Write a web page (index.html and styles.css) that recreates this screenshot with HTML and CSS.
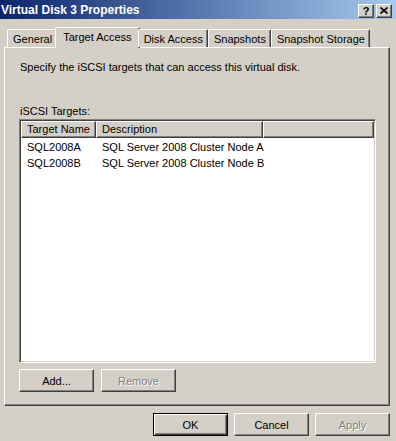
FILE: index.html
```html
<!DOCTYPE html>
<html lang="en">
<head>
    <meta charset="UTF-8">
    <title>Virtual Disk 3 Properties</title>
    <link rel="stylesheet" href="styles.css">
</head>
<body>
    <div class="window">
        <div class="titlebar">
            <span class="title">Virtual Disk 3 Properties</span>
            <div class="caption-btns">
                <span class="cap-btn">?</span>
                <span class="cap-btn">
                    <svg width="8" height="7" viewBox="0 0 8 7"><path d="M0.5 0.5 L7.5 6.5 M7.5 0.5 L0.5 6.5" stroke="#000" stroke-width="1.6" fill="none"/></svg>
                </span>
            </div>
        </div>

        <div class="content">
            <div class="tabs">
                <div class="tab">General</div>
                <div class="tab tab-active">Target Access</div>
                <div class="tab">Disk Access</div>
                <div class="tab">Snapshots</div>
                <div class="tab">Snapshot Storage</div>
            </div>

            <div class="panel">
                <p class="intro">Specify the iSCSI targets that can access this virtual disk.</p>
                <p class="list-label">iSCSI Targets:</p>
                <div class="listview">
                    <div class="lv-header">
                        <div class="lv-col col-name">Target Name</div>
                        <div class="lv-col col-desc">Description</div>
                        <div class="lv-col col-fill"></div>
                    </div>
                    <div class="lv-row">
                        <div class="lv-cell col-name">SQL2008A</div>
                        <div class="lv-cell col-desc">SQL Server 2008 Cluster Node A</div>
                    </div>
                    <div class="lv-row">
                        <div class="lv-cell col-name">SQL2008B</div>
                        <div class="lv-cell col-desc">SQL Server 2008 Cluster Node B</div>
                    </div>
                </div>
                <div class="panel-buttons">
                    <button class="btn">Add...</button>
                    <button class="btn" disabled>Remove</button>
                </div>
            </div>

            <div class="dialog-buttons">
                <button class="btn btn-default">OK</button>
                <button class="btn">Cancel</button>
                <button class="btn" disabled>Apply</button>
            </div>
        </div>
    </div>
</body>
</html>
```
FILE: styles.css
```css
body {
    margin: 0;
    background-color: #d4d0c8;
    font-family: "Liberation Sans", Arial, sans-serif;
    font-size: 11px;
    color: #000;
}
.window {
    width: 396px;
    height: 441px;
    overflow: hidden;
}
.titlebar {
    height: 19px;
    box-sizing: border-box;
    padding: 0 4px 0 1px;
    display: flex;
    align-items: center;
    justify-content: space-between;
    background: linear-gradient(to right, #0a246a, #a6caf0);
}
.title {
    color: #fff;
    font-weight: bold;
    font-size: 12px;
}
.caption-btns {
    display: flex;
    gap: 2px;
    margin-top: 2px;
}
.cap-btn {
    width: 16px;
    height: 14px;
    box-sizing: border-box;
    display: flex;
    align-items: center;
    justify-content: center;
    background-color: #d4d0c8;
    border: 1px solid;
    border-color: #fff #404040 #404040 #fff;
    box-shadow: inset -1px -1px #808080;
    font-weight: bold;
    font-size: 11px;
}
.content {
    padding: 8px 6px 0 4px;
}
.tabs {
    display: flex;
    align-items: flex-end;
    height: 20px;
    padding-left: 3px;
    position: relative;
    z-index: 1;
}
.tab {
    height: 18px;
    box-sizing: border-box;
    padding: 0 4px 0 5px;
    display: flex;
    align-items: center;
    border-left: 1px solid #fff;
    border-top: 1px solid #fff;
    border-right: 1px solid #404040;
    border-radius: 2px 2px 0 0;
    box-shadow: inset -1px 0 #808080;
    background-color: #d4d0c8;
}
.tab-active {
    height: 21px;
    margin: 0 -2px -1px;
    padding: 0 7px 3px;
}
.panel {
    height: 359px;
    box-sizing: border-box;
    border: 1px solid;
    border-color: #fff #404040 #404040 #fff;
    box-shadow: inset -1px -1px #808080;
    padding: 13px 13px 0 14px;
}
.intro {
    margin: 0;
    line-height: 13px;
    padding-left: 1px;
}
.list-label {
    margin: 31px 0 1px;
    line-height: 13px;
    padding-left: 1px;
}
.listview {
    height: 244px;
    box-sizing: border-box;
    padding: 1px;
    background-color: #fff;
    border: 1px solid;
    border-color: #808080 #fff #fff #808080;
    box-shadow: inset 1px 1px #404040, inset -1px -1px #d4d0c8;
}
.lv-header {
    display: flex;
    height: 17px;
}
.lv-col {
    box-sizing: border-box;
    height: 17px;
    padding-left: 5px;
    line-height: 15px;
    background-color: #d4d0c8;
    border: 1px solid;
    border-color: #fff #404040 #404040 #fff;
    box-shadow: inset -1px -1px #808080;
}
.col-name {
    width: 75px;
    flex-shrink: 0;
}
.col-desc {
    width: 167px;
    flex-shrink: 0;
}
.col-fill {
    flex: 1;
}
.lv-row {
    display: flex;
    height: 16px;
    line-height: 16px;
}
.lv-header + .lv-row {
    margin-top: 1px;
}
.lv-cell {
    padding-left: 6px;
    box-sizing: border-box;
    white-space: nowrap;
}
.btn {
    width: 75px;
    height: 23px;
    padding: 0;
    font: inherit;
    color: #000;
    background-color: #d4d0c8;
    border: 1px solid;
    border-color: #fff #404040 #404040 #fff;
    box-shadow: inset -1px -1px #808080;
}
.btn:disabled {
    color: #808080;
    text-shadow: 1px 1px #fff;
}
.btn-default {
    border-color: #000;
    box-shadow: inset 1px 1px #fff, inset -1px -1px #404040, inset -2px -2px #808080;
}
.panel-buttons {
    display: flex;
    gap: 7px;
    margin-top: 6px;
}
.dialog-buttons {
    display: flex;
    justify-content: flex-end;
    gap: 6px;
    margin-top: 7px;
}
```
